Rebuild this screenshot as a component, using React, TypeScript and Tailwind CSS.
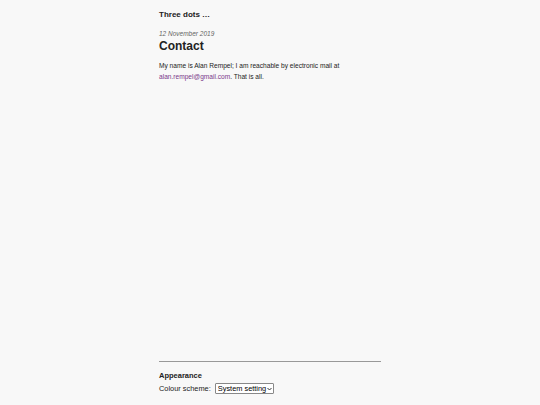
export default function App() {
  return (
    <div
      className="min-h-screen bg-[#f8f8f8] text-[#222] flex flex-col"
      style={{ fontFamily: '"Liberation Sans", Arial, sans-serif' }}
    >
      <div className="w-[222px] mx-auto flex flex-col flex-1">
        {/* Header */}
        <header className="pt-[10px] text-[8px] leading-[10px]">
          <a className="font-bold text-[#222]">Three dots …</a>
        </header>

        {/* Post */}
        <main className="flex-1 mt-[8.5px]">
          <div className="text-[6.5px] leading-[9px] italic text-[#666]">12 November 2019</div>
          <h1 className="text-[12px] leading-[14px] font-bold mt-[1.5px]">Contact</h1>
          <p className="text-[6.6px] leading-[11px] mt-[6.5px] text-[#222]">
            My name is Alan Rempel; I am reachable by electronic mail at{" "}
            <a className="text-[#7a3a8a]">alan.rempel@gmail.com</a>. That is all.
          </p>
        </main>

        {/* Footer */}
        <footer className="pb-[11px]">
          <hr className="border-t border-[#999]" />
          <div className="text-[7.5px] leading-[10px] font-bold mt-[9px]">Appearance</div>
          <div className="flex items-center gap-[4px] text-[7.4px] leading-[11px] mt-[2px]">
            <span>Colour scheme:</span>
            <div className="relative">
              <select
                className="appearance-none text-[7.4px] leading-[9px] text-black border border-[#888] bg-white h-[11px] w-[59px] pl-[2px] pr-[2px] rounded-[1px]"
                style={{ fontFamily: '"Liberation Sans", Arial, sans-serif' }}
              >
                <option>System setting</option>
              </select>
              <svg
                className="absolute right-[2px] top-[4px] pointer-events-none"
                width="5"
                height="4"
                viewBox="0 0 5 4"
              >
                <path d="M0.5 1 L2.5 3 L4.5 1" fill="none" stroke="#222" strokeWidth="0.9" />
              </svg>
            </div>
          </div>
        </footer>
      </div>
    </div>
  );
}
